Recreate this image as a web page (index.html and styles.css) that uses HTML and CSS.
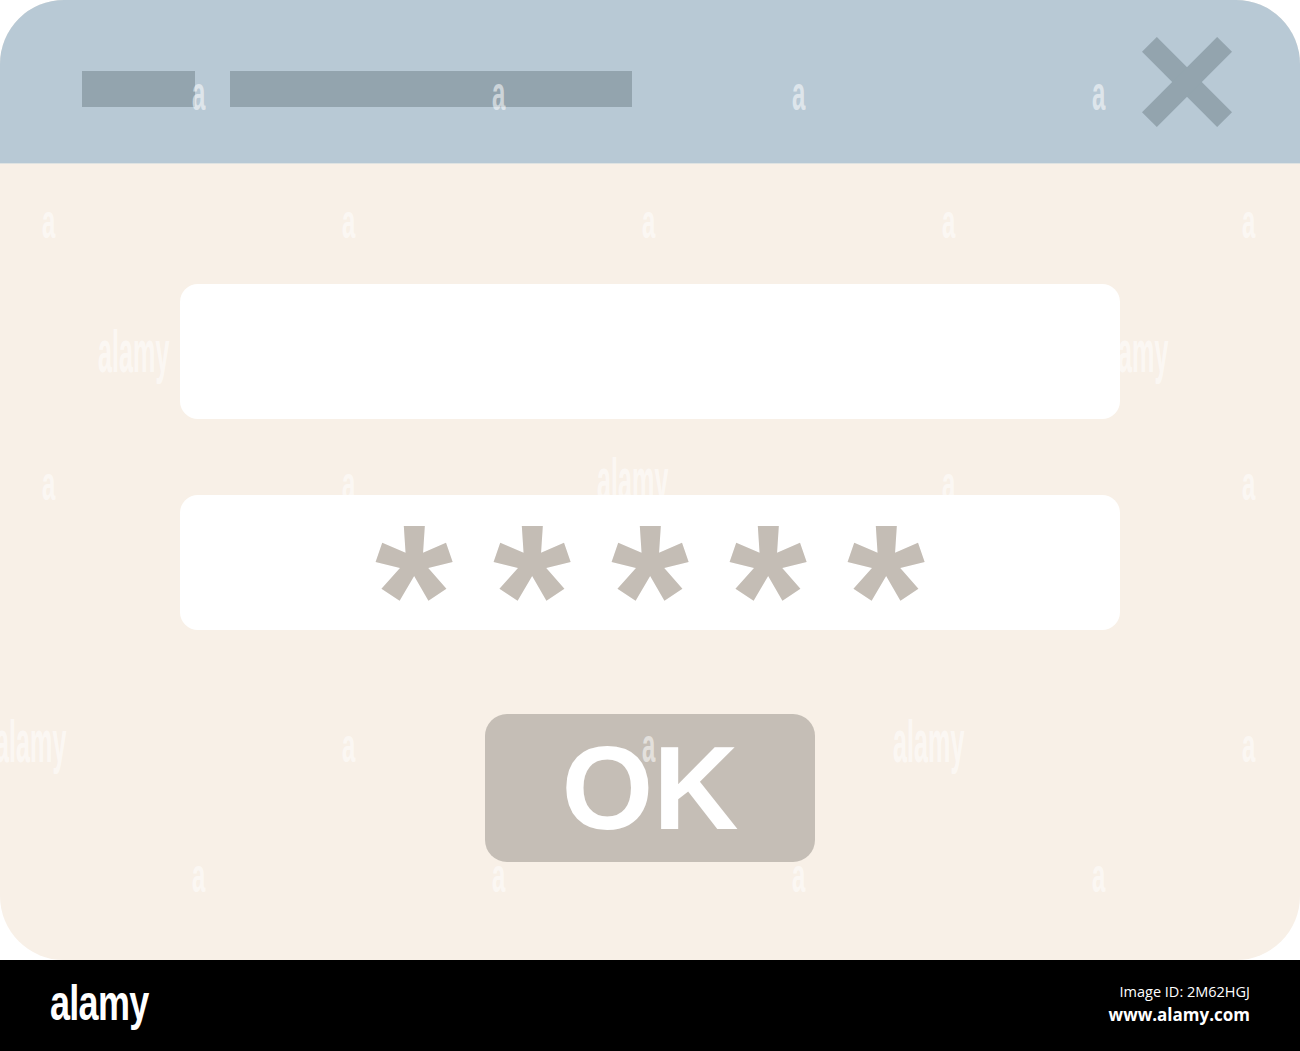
FILE: index.html
```html
<!DOCTYPE html>
<html lang="en">
<head>
<meta charset="utf-8">
<title>Login dialog</title>
<link rel="stylesheet" href="styles.css">
</head>
<body>
<div class="page">
  <div class="window">
    <div class="titlebar">
      <div class="bar bar-short"></div>
      <div class="bar bar-long"></div>
      <svg class="close" width="90" height="90" viewBox="0 0 90 90" aria-hidden="true">
        <line x1="7.4" y1="7.4" x2="82.6" y2="82.6" stroke="#93a4ae" stroke-width="21"/>
        <line x1="82.6" y1="7.4" x2="7.4" y2="82.6" stroke="#93a4ae" stroke-width="21"/>
      </svg>
    </div>
    <div class="content">
      <div class="field"></div>
      <div class="field field-pass">
        <span class="star">*</span><span class="star">*</span><span class="star">*</span><span class="star">*</span><span class="star">*</span>
      </div>
      <div class="ok">OK</div>
    </div>
  </div>
  <div class="footer">
    <div class="logo">alamy</div>
    <div class="meta">
      <div class="imgid">Image ID: 2M62HGJ</div>
      <div class="site">www.alamy.com</div>
    </div>
  </div>
  <div class="wm" aria-hidden="true">
    <span class="wa" style="left:192px;top:70px">a</span>
    <span class="wa" style="left:492px;top:70px">a</span>
    <span class="wa" style="left:792px;top:70px">a</span>
    <span class="wa" style="left:1092px;top:70px">a</span>
    <span class="wa" style="left:42px;top:198px">a</span>
    <span class="wa" style="left:342px;top:198px">a</span>
    <span class="wa" style="left:642px;top:198px">a</span>
    <span class="wa" style="left:942px;top:198px">a</span>
    <span class="wa" style="left:1242px;top:198px">a</span>
    <span class="wl" style="left:98px;top:322px">alamy</span>
    <span class="wl" style="left:1097px;top:322px">alamy</span>
    <span class="wa" style="left:42px;top:460px">a</span>
    <span class="wa" style="left:342px;top:460px">a</span>
    <span class="wl" style="left:597px;top:450px">alamy</span>
    <span class="wa" style="left:942px;top:460px">a</span>
    <span class="wa" style="left:1242px;top:460px">a</span>
    <span class="wl" style="left:-5px;top:712px">alamy</span>
    <span class="wa" style="left:342px;top:722px">a</span>
    <span class="wa" style="left:642px;top:722px">a</span>
    <span class="wl" style="left:893px;top:712px">alamy</span>
    <span class="wa" style="left:1242px;top:722px">a</span>
    <span class="wa" style="left:192px;top:852px">a</span>
    <span class="wa" style="left:492px;top:852px">a</span>
    <span class="wa" style="left:792px;top:852px">a</span>
    <span class="wa" style="left:1092px;top:852px">a</span>
  </div>
</div>
</body>
</html>
```

FILE: styles.css
```css
html, body {
  margin: 0;
  padding: 0;
  background: #ffffff;
}

.page {
  position: relative;
  width: 1300px;
  height: 1051px;
  overflow: hidden;
  font-family: "Liberation Sans", Arial, sans-serif;
}

.window {
  width: 1300px;
  height: 960px;
  border-radius: 64px;
  overflow: hidden;
  background: #f8f0e7;
  display: flex;
  flex-direction: column;
}

.titlebar {
  height: 164px;
  background: #b8c9d5;
  border-bottom: 1px solid #dfe3e2;
  display: flex;
  align-items: flex-start;
  padding: 71px 0 0 82px;
  box-sizing: border-box;
  position: relative;
}

.bar {
  height: 36px;
  background: #93a4ae;
}

.bar-short { width: 113px; margin-right: 35px; }
.bar-long { width: 402px; }

.close {
  margin-left: auto;
  margin-right: 68px;
  margin-top: -34px;
  display: block;
}

.content {
  flex: 1;
  display: flex;
  flex-direction: column;
  align-items: center;
  padding-top: 120px;
}

.field {
  width: 940px;
  height: 135px;
  background: #ffffff;
  border-radius: 18px;
  flex: none;
}

.field-pass {
  margin-top: 76px;
  display: flex;
  justify-content: center;
  align-items: flex-start;
}

.star {
  width: 118px;
  text-align: center;
  font-family: "Liberation Sans", Arial, sans-serif;
  font-weight: bold;
  font-size: 200px;
  line-height: 200px;
  height: 135px;
  overflow: visible;
  color: #c4bdb5;
}

.ok {
  margin-top: 84px;
  width: 330px;
  height: 148px;
  border-radius: 22px;
  background: #c5beb6;
  color: #ffffff;
  font-weight: bold;
  font-size: 118px;
  line-height: 1;
  display: flex;
  align-items: center;
  justify-content: center;
}

.footer {
  height: 91px;
  background: #000000;
  display: flex;
  align-items: center;
  justify-content: space-between;
  padding: 0 50px;
}

.logo {
  color: #ffffff;
  font-family: "Liberation Sans", Arial, sans-serif;
  font-weight: bold;
  font-size: 50px;
  letter-spacing: -1px;
  line-height: 1;
  transform: scaleX(0.72);
  transform-origin: left center;
  margin-top: -6px;
}

.meta {
  text-align: right;
  color: #ffffff;
  font-family: "Open Sans", "Noto Sans", sans-serif;
  margin-top: -4px;
}

.imgid {
  font-size: 14.5px;
  line-height: 22px;
}

.site {
  font-size: 17px;
  font-weight: bold;
  line-height: 24px;
}

.wm {
  position: absolute;
  left: 0;
  top: 0;
  width: 1300px;
  height: 960px;
  pointer-events: none;
}

.wa, .wl {
  position: absolute;
  font-family: "Liberation Sans", Arial, sans-serif;
  font-weight: bold;
  color: rgba(255, 255, 255, 0.55);
  line-height: 1;
  transform: scaleX(0.5);
  transform-origin: left top;
}

.wa { font-size: 48px; }
.wl { font-size: 60px; transform: scaleX(0.42); }
```
